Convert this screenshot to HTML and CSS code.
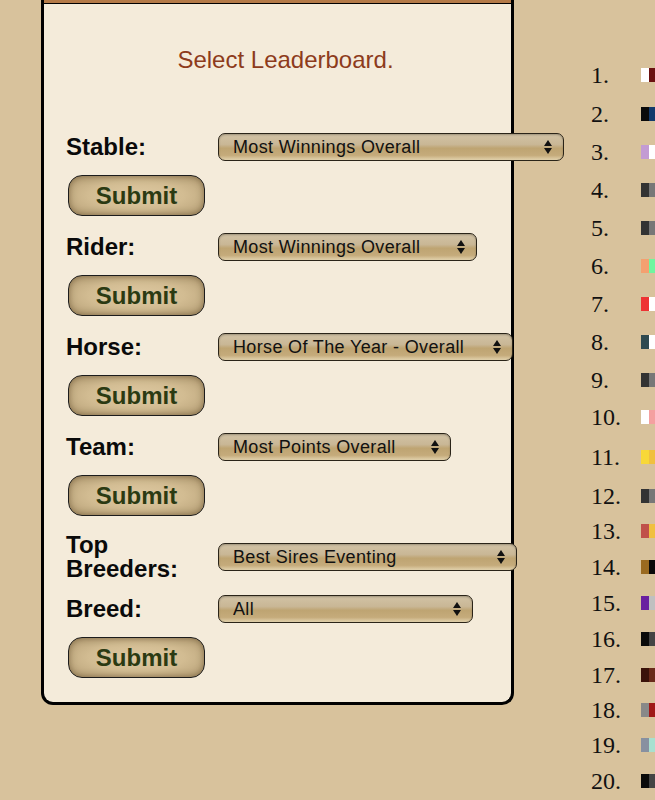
FILE: index.html
```html
<!DOCTYPE html>
<html lang="en">
<head>
    <meta charset="UTF-8">
    <meta name="viewport" content="width=device-width, initial-scale=1.0">
    <title>Leaderboards</title>
    <link rel="stylesheet" href="styles.css">
</head>
<body>

<div class="page">

    <!-- Leaderboard picker -->
    <div class="panel">
        <div class="panel-head"></div>
        <h2 class="title">Select Leaderboard.</h2>

        <form class="board">
            <label class="field-label">Stable:</label>
            <div class="pick"><select class="sel-stable"><option>Most Winnings Overall</option></select></div>
            <button type="button" class="submit">Submit</button>

            <label class="field-label">Rider:</label>
            <div class="pick"><select class="sel-rider"><option>Most Winnings Overall</option></select></div>
            <button type="button" class="submit">Submit</button>

            <label class="field-label">Horse:</label>
            <div class="pick"><select class="sel-horse"><option>Horse Of The Year - Overall</option></select></div>
            <button type="button" class="submit">Submit</button>

            <label class="field-label">Team:</label>
            <div class="pick"><select class="sel-team"><option>Most Points Overall</option></select></div>
            <button type="button" class="submit">Submit</button>

            <label class="field-label">Top Breeders:</label>
            <div class="pick"><select class="sel-breeders"><option>Best Sires Eventing</option></select></div>

            <label class="field-label">Breed:</label>
            <div class="pick"><select class="sel-breed"><option>All</option></select></div>
            <button type="button" class="submit">Submit</button>
        </form>
    </div>

    <!-- Ranking list -->
    <div class="ranks">
        <div class="rank-row"><span class="rank-num">1.</span><span class="swatch"><i class="c-white"></i><i class="c-maroon"></i><i class="c-white"></i></span></div>
        <div class="rank-row"><span class="rank-num">2.</span><span class="swatch"><i class="c-black"></i><i class="c-navy"></i><i class="c-white"></i></span></div>
        <div class="rank-row"><span class="rank-num">3.</span><span class="swatch"><i class="c-lilac"></i><i class="c-white"></i><i class="c-lilac"></i></span></div>
        <div class="rank-row"><span class="rank-num">4.</span><span class="swatch"><i class="c-dark"></i><i class="c-grey"></i><i class="c-dark"></i></span></div>
        <div class="rank-row"><span class="rank-num">5.</span><span class="swatch"><i class="c-dark"></i><i class="c-grey"></i><i class="c-dark"></i></span></div>
        <div class="rank-row"><span class="rank-num">6.</span><span class="swatch"><i class="c-salmon"></i><i class="c-mint"></i><i class="c-salmon"></i></span></div>
        <div class="rank-row"><span class="rank-num">7.</span><span class="swatch"><i class="c-red"></i><i class="c-white"></i><i class="c-red"></i></span></div>
        <div class="rank-row"><span class="rank-num">8.</span><span class="swatch"><i class="c-teal"></i><i class="c-white"></i><i class="c-teal"></i></span></div>
        <div class="rank-row"><span class="rank-num">9.</span><span class="swatch"><i class="c-dark"></i><i class="c-grey"></i><i class="c-dark"></i></span></div>
        <div class="rank-row"><span class="rank-num">10.</span><span class="swatch"><i class="c-white"></i><i class="c-pink"></i><i class="c-white"></i></span></div>
        <div class="rank-row"><span class="rank-num">11.</span><span class="swatch"><i class="c-yellow"></i><i class="c-gold"></i><i class="c-yellow"></i></span></div>
        <div class="rank-row"><span class="rank-num">12.</span><span class="swatch"><i class="c-dark"></i><i class="c-grey"></i><i class="c-dark"></i></span></div>
        <div class="rank-row"><span class="rank-num">13.</span><span class="swatch"><i class="c-brick"></i><i class="c-gold"></i><i class="c-brick"></i></span></div>
        <div class="rank-row"><span class="rank-num">14.</span><span class="swatch"><i class="c-bronze"></i><i class="c-black"></i><i class="c-bronze"></i></span></div>
        <div class="rank-row"><span class="rank-num">15.</span><span class="swatch"><i class="c-purple"></i><i class="c-silver"></i><i class="c-purple"></i></span></div>
        <div class="rank-row"><span class="rank-num">16.</span><span class="swatch"><i class="c-black"></i><i class="c-coal"></i><i class="c-black"></i></span></div>
        <div class="rank-row"><span class="rank-num">17.</span><span class="swatch"><i class="c-choc"></i><i class="c-rust"></i><i class="c-choc"></i></span></div>
        <div class="rank-row"><span class="rank-num">18.</span><span class="swatch"><i class="c-ash"></i><i class="c-crimson"></i><i class="c-ash"></i></span></div>
        <div class="rank-row"><span class="rank-num">19.</span><span class="swatch"><i class="c-slate"></i><i class="c-aqua"></i><i class="c-slate"></i></span></div>
        <div class="rank-row"><span class="rank-num">20.</span><span class="swatch"><i class="c-black"></i><i class="c-coal"></i><i class="c-black"></i></span></div>
    </div>

</div>

</body>
</html>
```

FILE: styles.css
```css
html, body {
    margin: 0;
    padding: 0;
    overflow: hidden;
}

body {
    font-family: "Liberation Sans", Arial, sans-serif;
    background-color: #d8c29c;
    color: #0a0a0a;
}

.page {
    display: flex;
    align-items: flex-start;
}

/* Panel */
.panel {
    flex-shrink: 0;
    width: 473px;
    box-sizing: border-box;
    margin-left: 41px;
    background: #f4ebda;
    border: 3px solid #000;
    border-top: none;
    border-radius: 0 0 12px 12px;
    padding-bottom: 21px;
}

.panel-head {
    height: 3px;
    background: #b47a48;
    border-bottom: 1px solid #000;
}

.title {
    margin: 42px 0 0;
    padding-left: 16px;
    text-align: center;
    font-size: 24px;
    line-height: 28px;
    font-weight: normal;
    color: #8d3b1c;
}

/* Form rows */
.board {
    display: grid;
    grid-template-columns: 152px auto;
    row-gap: 14px;
    align-items: center;
    margin-top: 59px;
    padding-left: 22px;
}

.field-label {
    font-size: 24px;
    line-height: 24px;
    font-weight: bold;
}

.pick {
    position: relative;
    display: inline-block;
    justify-self: start;
}

.pick::before,
.pick::after {
    content: "";
    position: absolute;
    right: 12px;
    border-left: 4px solid transparent;
    border-right: 4px solid transparent;
    pointer-events: none;
}

.pick::before {
    top: 7px;
    border-bottom: 6px solid #111;
}

.pick::after {
    top: 15px;
    border-top: 6px solid #111;
}

select {
    appearance: none;
    -webkit-appearance: none;
    display: block;
    height: 28px;
    box-sizing: border-box;
    padding: 0 24px 0 14px;
    font-family: "Liberation Sans", Arial, sans-serif;
    font-size: 18px;
    letter-spacing: 0.35px;
    color: #111;
    border: 1px solid #2a2418;
    border-radius: 7px;
    background: linear-gradient(to bottom, #d2c3a5 0%, #c9b796 40%, #bea472 55%, #c5ab7b 82%, #e2d2ac 100%);
    box-shadow: inset 0 1px 2px rgba(0, 0, 0, 0.25);
}

.sel-stable { width: 346px; }
.sel-rider { width: 259px; }
.sel-horse { width: 295px; }
.sel-team { width: 233px; }
.sel-breeders { width: 299px; }
.sel-breed { width: 255px; }

.submit {
    grid-column: 1 / span 2;
    justify-self: start;
    width: 137px;
    height: 41px;
    margin: 0 0 3px 2px;
    padding: 0;
    font-family: "Liberation Sans", Arial, sans-serif;
    font-size: 24px;
    font-weight: bold;
    color: #2b3a12;
    border: 1.5px solid #1c1c1c;
    border-radius: 14px;
    background: radial-gradient(ellipse at center, #dec9a2 0%, #d2bc92 50%, #b39c73 100%);
    box-shadow: inset 0 0 7px rgba(60, 40, 10, 0.5);
    cursor: pointer;
}

/* Ranking list */
.ranks {
    flex-shrink: 0;
    margin-left: 77px;
    margin-top: 55px;
}

.rank-row {
    display: flex;
    align-items: center;
    height: 36px;
}

.rank-row:nth-child(1) { height: 40px; }
.rank-row:nth-child(n+2):nth-child(-n+9) { height: 38px; }
.rank-row:nth-child(11) { height: 44px; }
.rank-row:nth-child(12),
.rank-row:nth-child(18) { height: 34px; }

.rank-num {
    width: 50px;
    font-family: "Liberation Serif", "Times New Roman", serif;
    font-size: 24px;
    color: #111;
}

.swatch {
    display: flex;
}

.swatch i {
    width: 8px;
    height: 14px;
}

.c-white { background: #ffffff; }
.c-maroon { background: #6b1010; }
.c-black { background: #0a0a0a; }
.c-navy { background: #133a6c; }
.c-lilac { background: #c39bd3; }
.c-dark { background: #333333; }
.c-grey { background: #777777; }
.c-salmon { background: #f4a070; }
.c-mint { background: #70f5a0; }
.c-red { background: #ee3333; }
.c-teal { background: #2f4a50; }
.c-pink { background: #f4a0a0; }
.c-yellow { background: #f8d838; }
.c-gold { background: #f0c040; }
.c-brick { background: #c0504a; }
.c-bronze { background: #9a6a20; }
.c-purple { background: #6a1fa0; }
.c-silver { background: #c0c0c0; }
.c-coal { background: #444444; }
.c-choc { background: #3a120a; }
.c-rust { background: #6a2a1a; }
.c-ash { background: #888888; }
.c-crimson { background: #a01818; }
.c-slate { background: #8890a0; }
.c-aqua { background: #a8e0d0; }
```
